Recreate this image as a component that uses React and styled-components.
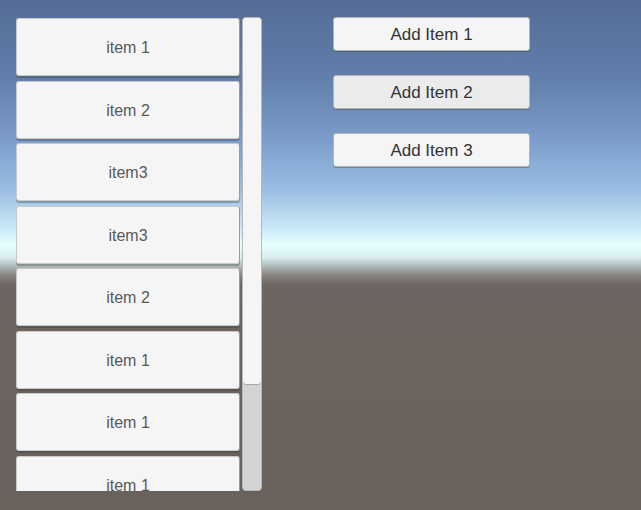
import React from "react";
import styled, { createGlobalStyle } from "styled-components";

const GlobalStyle = createGlobalStyle`
  html, body {
    margin: 0;
    padding: 0;
  }
  body {
    font-family: "Liberation Sans", Arial, sans-serif;
  }
`;

// skybox: blue sky fading to a bright horizon, then the grey ground
const Scene = styled.div`
  min-height: 100vh;
  box-sizing: border-box;
  padding: 17px 0 0 16px;
  display: flex;
  align-items: flex-start;
  background: linear-gradient(
    to bottom,
    #546b97 0px,
    #627fab 80px,
    #7c9dca 140px,
    #98bce2 188px,
    #c6e6f6 226px,
    #e6ffff 245px,
    #d8eeee 257px,
    #aab5b5 267px,
    #86817e 276px,
    #6c6561 285px,
    #69615b 510px
  );
`;

const ScrollView = styled.div`
  display: flex;
  height: 474px;
`;

const Viewport = styled.div`
  width: 224px;
  height: 100%;
  overflow: hidden;
  padding-top: 1px;
  box-sizing: border-box;
`;

const ItemList = styled.div`
  display: flex;
  flex-direction: column;
  gap: 4.5px;
`;

const Item = styled.div`
  flex: none;
  height: 58px;
  box-sizing: border-box;
  padding-top: 2px;
  display: flex;
  align-items: center;
  justify-content: center;
  background: #f5f5f5;
  border: 1px solid #c9c9c9;
  border-right-color: #9a9a9a;
  border-radius: 3px;
  box-shadow: 0 2px 0 rgba(60, 60, 60, 0.35);
  color: #595959;
  font-size: 16px;
`;

const Scrollbar = styled.div`
  width: 20px;
  margin-left: 2px;
  height: 100%;
  box-sizing: border-box;
  display: flex;
  flex-direction: column;
  background: #d4d4d4;
  border: 1px solid #b8b8b8;
  border-radius: 4px;
  overflow: hidden;
`;

const Handle = styled.div`
  height: ${(p) => p.$size}px;
  background: #f5f5f5;
  border-bottom: 1px solid #a8a8a8;
  border-radius: 0 0 4px 4px;
`;

const ButtonColumn = styled.div`
  margin-left: 71px;
  display: flex;
  flex-direction: column;
  gap: 24px;
`;

const AddButton = styled.button`
  width: 197px;
  height: 34px;
  padding: 2px 0 0;
  font-family: inherit;
  font-size: 17px;
  color: #333;
  background: ${(p) => (p.$hover ? "#ebebeb" : "#f5f5f5")};
  border: 1px solid #b4b4b4;
  border-radius: 3px;
  box-shadow: 0 1px 0 rgba(40, 40, 40, 0.3);
  cursor: pointer;
`;

const items = ["item 1", "item 2", "item3", "item3", "item 2", "item 1", "item 1", "item 1"];

export default function App() {
  return (
    <>
      <GlobalStyle />
      <Scene>
        <ScrollView>
          <Viewport>
            <ItemList>
              {items.map((label, i) => (
                <Item key={i}>{label}</Item>
              ))}
            </ItemList>
          </Viewport>
          <Scrollbar>
            <Handle $size={366} />
          </Scrollbar>
        </ScrollView>
        <ButtonColumn>
          <AddButton>Add Item 1</AddButton>
          <AddButton $hover>Add Item 2</AddButton>
          <AddButton>Add Item 3</AddButton>
        </ButtonColumn>
      </Scene>
    </>
  );
}
